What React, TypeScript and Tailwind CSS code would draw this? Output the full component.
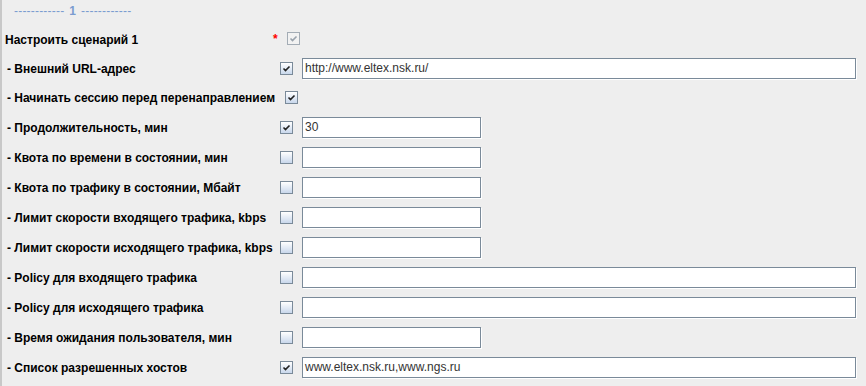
import type { ReactNode } from "react";

type Field = "wide" | "short" | null;

interface Row {
    label: string;
    checked: boolean;
    field: Field;
    value?: string;
    h: string;
}

const rows: Row[] = [
    { label: "- Внешний URL-адрес", checked: true, field: "wide", value: "http://www.eltex.nsk.ru/", h: "h-[30px]" },
    { label: "- Начинать сессию перед перенаправлением", checked: true, field: null, h: "h-[29px]" },
    { label: "- Продолжительность, мин", checked: true, field: "short", value: "30", h: "h-[30px]" },
    { label: "- Квота по времени в состоянии, мин", checked: false, field: "short", h: "h-[30px]" },
    { label: "- Квота по трафику в состоянии, Мбайт", checked: false, field: "short", h: "h-[30px]" },
    { label: "- Лимит скорости входящего трафика, kbps", checked: false, field: "short", h: "h-[30px]" },
    { label: "- Лимит скорости исходящего трафика, kbps", checked: false, field: "short", h: "h-[30px]" },
    { label: "- Policy для входящего трафика", checked: false, field: "wide", h: "h-[30px]" },
    { label: "- Policy для исходящего трафика", checked: false, field: "wide", h: "h-[30px]" },
    { label: "- Время ожидания пользователя, мин", checked: false, field: "short", h: "h-[30px]" },
    { label: "- Список разрешенных хостов", checked: true, field: "wide", value: "www.eltex.nsk.ru,www.ngs.ru", h: "h-[30px]" },
];

function CheckBox({ checked, disabled }: { checked: boolean; disabled?: boolean }) {
    return (
        <div
            className={
                "flex h-[13px] w-[13px] shrink-0 items-center justify-center border " +
                (disabled
                    ? "border-[#a3acb5] bg-[#f2f2f2]"
                    : "border-[#7a8a99] bg-gradient-to-b from-[#ffffff] to-[#c9d8ec]")
            }
        >
            {checked && (
                <svg width="9" height="9" viewBox="0 0 9 9">
                    <path
                        d="M1.5 4.5 L3.5 6.5 L7.5 2.5"
                        fill="none"
                        stroke={disabled ? "#9aa3ad" : "#222"}
                        strokeWidth="1.6"
                    />
                    <path d="M2 5 L3.5 7 L3.5 5 Z" fill={disabled ? "#9aa3ad" : "#222"} />
                </svg>
            )}
        </div>
    );
}

function TextField({ wide, value }: { wide: boolean; value?: string }) {
    return (
        <div
            className={
                "flex h-[21px] items-center border border-[#7a8a99] bg-white pl-[2px] text-[12px] text-[#333] shadow-[1px_1px_0_#ffffff] " +
                (wide ? "w-[554px]" : "w-[179px]")
            }
        >
            {value}
        </div>
    );
}

function Label({ children, bold }: { children: ReactNode; bold?: boolean }) {
    return <span className={"text-[12px] text-black " + (bold ? "font-bold" : "")}>{children}</span>;
}

export default function App() {
    return (
        <div
            className="h-[386px] w-[866px] overflow-hidden border-l-2 border-[#c8c8c8] bg-[#eeeeee]"
            style={{ fontFamily: "'Liberation Sans', Arial, sans-serif" }}
        >
            <div className="flex h-[24px] items-start pt-[2px] pl-[12px] text-[12px] text-[#7b9cd0]">
                <span className="tracking-[0.2px]">------------</span>
                <span className="mx-[5px] font-bold">1</span>
                <span className="tracking-[0.2px]">------------</span>
            </div>

            <div className="flex h-[29px] items-center pl-[3px]">
                <div className="w-[268px]">
                    <Label bold>Настроить сценарий 1</Label>
                </div>
                <span className="w-[14px] text-[12px] font-bold text-[#ff0000]">*</span>
                <CheckBox checked disabled />
            </div>

            {rows.map((row) => (
                <div key={row.label} className={"flex items-center pl-[5px] " + row.h}>
                    {row.field ? (
                        <>
                            <div className="w-[273px]">
                                <Label bold>{row.label}</Label>
                            </div>
                            <CheckBox checked={row.checked} />
                            <div className="ml-[9px]">
                                <TextField wide={row.field === "wide"} value={row.value} />
                            </div>
                        </>
                    ) : (
                        <>
                            <Label bold>{row.label}</Label>
                            <div className="ml-[10px]">
                                <CheckBox checked={row.checked} />
                            </div>
                        </>
                    )}
                </div>
            ))}
        </div>
    );
}
